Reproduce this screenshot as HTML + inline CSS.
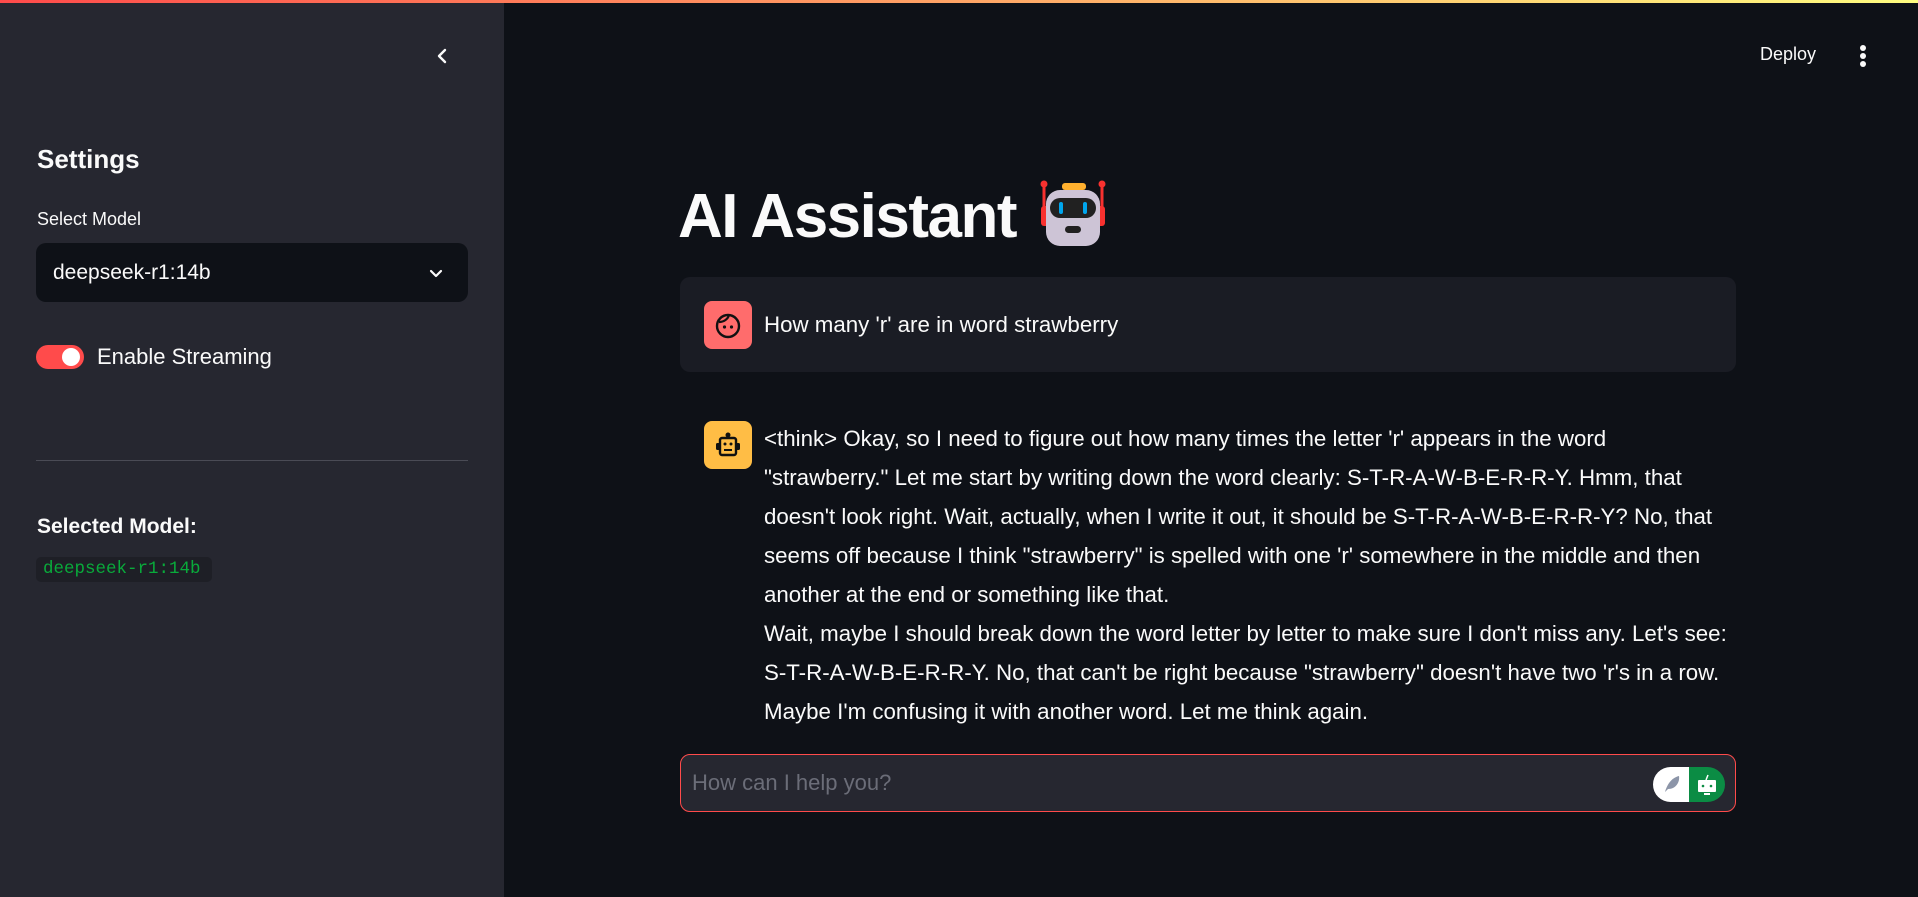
<!DOCTYPE html>
<html><head><meta charset="utf-8"><style>
*{margin:0;padding:0;box-sizing:border-box}
body{width:1918px;height:897px;overflow:hidden;background:#0e1117;font-family:"Liberation Sans",sans-serif;color:#fafafa;position:relative}
.top{position:absolute;left:0;top:0;width:1918px;height:3px;background:linear-gradient(90deg,#ff4b4b,#fffd80)}
.side{position:absolute;left:0;top:3px;width:504px;height:894px;background:#262730}
.abs{position:absolute;white-space:nowrap}
.msg{font-size:22.3px;line-height:39px}
</style></head><body>
<div class="top"></div>
<div class="side"></div>
<svg class="abs" style="left:432px;top:46px" width="20" height="20" viewBox="0 0 20 20"><path d="M13 4 L7 10 L13 16" fill="none" stroke="#fafafa" stroke-width="2.4" stroke-linecap="round" stroke-linejoin="round"/></svg>
<div class="abs" style="left:37px;top:144px;font-size:26px;font-weight:bold">Settings</div>
<div class="abs" style="left:37px;top:209px;font-size:18px">Select Model</div>
<div class="abs" style="left:36px;top:243px;width:432px;height:59px;background:#0e1117;border-radius:10px"></div>
<div class="abs" style="left:53px;top:261px;font-size:21px">deepseek-r1:14b</div>
<svg class="abs" style="left:427px;top:264px" width="18" height="18" viewBox="0 0 18 18"><path d="M4 7 L9 12 L14 7" fill="none" stroke="#fafafa" stroke-width="2.2" stroke-linecap="round" stroke-linejoin="round"/></svg>
<div class="abs" style="left:36px;top:345px;width:48px;height:24px;background:#ff4b4b;border-radius:12px"></div>
<div class="abs" style="left:62px;top:348px;width:18px;height:18px;background:#fff;border-radius:50%"></div>
<div class="abs" style="left:97px;top:344px;font-size:22px">Enable Streaming</div>
<div class="abs" style="left:36px;top:460px;width:432px;height:1px;background:#4a4b55"></div>
<div class="abs" style="left:37px;top:515px;font-size:21px;font-weight:bold">Selected Model:</div>
<div class="abs" style="left:36px;top:557px;width:176px;height:25px;background:#1e1f26;border-radius:5px"></div>
<div class="abs" style="left:43px;top:559px;font-family:'Liberation Mono',monospace;font-size:17.5px;color:#09ab3b;line-height:20px">deepseek-r1:14b</div>
<div class="abs" style="left:1760px;top:44px;font-size:18px">Deploy</div>
<div class="abs" style="left:1860px;top:45px;width:6px;height:6px;background:#fafafa;border-radius:50%"></div>
<div class="abs" style="left:1860px;top:53px;width:6px;height:6px;background:#fafafa;border-radius:50%"></div>
<div class="abs" style="left:1860px;top:61px;width:6px;height:6px;background:#fafafa;border-radius:50%"></div>
<div class="abs" style="left:678px;top:181px;font-size:62px;font-weight:bold;letter-spacing:-1.5px">AI Assistant</div>
<svg class="abs" style="left:1040px;top:180px" width="68" height="68" viewBox="0 0 68 68"><rect x="22" y="3" width="24" height="7" rx="3" fill="#ffb02e"/><line x1="4" y1="4" x2="4" y2="40" stroke="#f8312f" stroke-width="3"/><line x1="62" y1="4" x2="62" y2="40" stroke="#f8312f" stroke-width="3"/><circle cx="4" cy="4" r="3.5" fill="#f8312f"/><circle cx="62" cy="4" r="3.5" fill="#f8312f"/><rect x="1" y="26" width="8" height="20" rx="3" fill="#f8312f"/><rect x="57" y="26" width="8" height="20" rx="3" fill="#f8312f"/><rect x="6" y="10" width="54" height="56" rx="14" fill="#cdc4d6"/><rect x="10" y="18" width="46" height="20" rx="10" fill="#212121"/><rect x="19" y="22" width="4" height="12" rx="2" fill="#00a6ed"/><rect x="43" y="22" width="4" height="12" rx="2" fill="#00a6ed"/><rect x="25" y="46" width="16" height="7" rx="3.5" fill="#212121"/></svg>
<div class="abs" style="left:680px;top:277px;width:1056px;height:95px;background:#1a1c24;border-radius:10px"></div>
<div class="abs" style="left:704px;top:301px;width:48px;height:48px;background:#ff6c6c;border-radius:8px"></div>
<svg class="abs" style="left:712px;top:309px" width="32" height="32" viewBox="0 0 32 32"><circle cx="16" cy="17" r="11" fill="none" stroke="#111" stroke-width="2.4"/><path d="M7 13 C12 13 16 10 17 6" fill="none" stroke="#111" stroke-width="2.2"/><circle cx="12.5" cy="18" r="1.6" fill="#111"/><circle cx="19.5" cy="18" r="1.6" fill="#111"/></svg>
<div class="abs" style="left:764px;top:312px;font-size:22.3px">How many 'r' are in word strawberry</div>
<div class="abs" style="left:704px;top:421px;width:48px;height:48px;background:#ffbd45;border-radius:8px"></div>
<svg class="abs" style="left:712px;top:429px" width="32" height="32" viewBox="0 0 32 32"><circle cx="16" cy="6" r="2.5" fill="#111"/><rect x="8" y="9" width="16" height="17" rx="2" fill="none" stroke="#111" stroke-width="2.4"/><rect x="4" y="14" width="4" height="7" rx="1.5" fill="#111"/><rect x="24" y="14" width="4" height="7" rx="1.5" fill="#111"/><circle cx="13" cy="15" r="1.5" fill="#111"/><circle cx="19" cy="15" r="1.5" fill="#111"/><line x1="12" y1="21" x2="20" y2="21" stroke="#111" stroke-width="2"/></svg>
<div class="abs msg" style="left:764px;top:419px">&lt;think&gt; Okay, so I need to figure out how many times the letter 'r' appears in the word<br>"strawberry." Let me start by writing down the word clearly: S-T-R-A-W-B-E-R-R-Y. Hmm, that<br>doesn't look right. Wait, actually, when I write it out, it should be S-T-R-A-W-B-E-R-R-Y? No, that<br>seems off because I think "strawberry" is spelled with one 'r' somewhere in the middle and then<br>another at the end or something like that.<br>Wait, maybe I should break down the word letter by letter to make sure I don't miss any. Let's see:<br>S-T-R-A-W-B-E-R-R-Y. No, that can't be right because "strawberry" doesn't have two 'r's in a row.<br>Maybe I'm confusing it with another word. Let me think again.</div>
<div class="abs" style="left:680px;top:754px;width:1056px;height:58px;background:#262730;border:1px solid #ff4b4b;border-radius:10px"></div>
<div class="abs" style="left:692px;top:770px;font-size:22px;color:#6b6d78">How can I help you?</div>
<div class="abs" style="left:1653px;top:767px;width:36px;height:35px;background:#fff;border-radius:18px 0 0 18px"></div>
<div class="abs" style="left:1689px;top:767px;width:36px;height:35px;background:#0b8c44;border-radius:0 18px 18px 0"></div>
<svg class="abs" style="left:1661px;top:773px" width="22" height="22" viewBox="0 0 22 22"><path d="M4 19 C6 12 10 5 18 3 C19 9 15 16 7 16 Z" fill="#8c95a8"/></svg>
<svg class="abs" style="left:1695px;top:773px" width="24" height="24" viewBox="0 0 24 24"><line x1="13" y1="2" x2="11" y2="7" stroke="#fff" stroke-width="1.5"/><rect x="3" y="7" width="18" height="12" rx="1" fill="#fff"/><circle cx="8" cy="13" r="1.3" fill="#0b8c44"/><circle cx="16" cy="13" r="1.3" fill="#0b8c44"/><rect x="9" y="20" width="6" height="2" fill="#fff"/></svg>
</body></html>
